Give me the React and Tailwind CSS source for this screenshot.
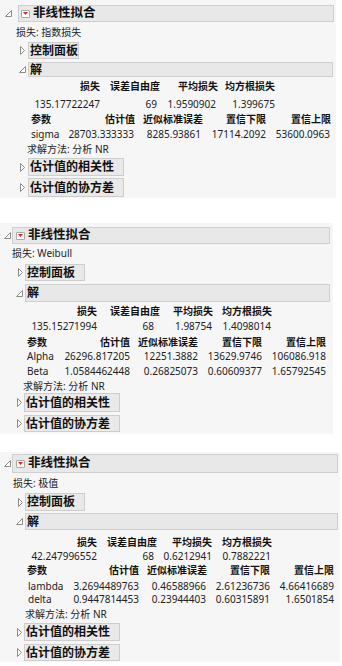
import React from "react";

const F = "font-['Noto_Sans','Noto_Sans_CJK_SC',sans-serif]";

function TriOpen() {
  return (
    <svg width="7" height="7" viewBox="0 0 7 7" className="block">
      <path d="M6.5 0.5V6.5H0.5Z" fill="#ffffff" stroke="#8c8c8c" strokeWidth="1" />
    </svg>
  );
}

function TriClosed() {
  return (
    <svg width="5" height="9" viewBox="0 0 5 9" className="block">
      <path d="M0.5 0.5L4.5 4.5L0.5 8.5Z" fill="#ffffff" stroke="#8c8c8c" strokeWidth="1" />
    </svg>
  );
}

function RedMenu() {
  return (
    <span className="flex h-[8px] w-[9px] shrink-0 items-center justify-center rounded-[1px] border border-[#a8a8a8] bg-white">
      <svg width="5" height="3" viewBox="0 0 5 3" className="block">
        <path d="M0 0H5L2.5 3Z" fill="#e3241f" />
      </svg>
    </span>
  );
}

function Row({ className, cols, cells, pads, bold, firstLeft }) {
  return (
    <div className={"flex h-[12px] items-center leading-[12px] " + className}>
      {cells.map((t, i) => (
        <div
          key={i}
          className={
            cols[i] +
            " shrink-0 whitespace-nowrap " +
            (firstLeft && i === 0 ? "text-left " : "text-right ") +
            (bold ? "font-bold text-[#111] " : "text-[#222] ") +
            ((pads && pads[i]) || "")
          }
        >
          {t}
        </div>
      ))}
    </div>
  );
}

function Panel({ c, loss, sumHdr, sumVals, params }) {
  return (
    <div className={"bg-[#f6f6f6] text-[10px] " + c.wrap}>
      {/* header */}
      <div className={"flex items-center " + c.head}>
        <div className={"flex h-full items-center shrink-0 " + c.headTri}>
          <TriOpen />
        </div>
        <div className={"flex h-full items-center border border-[#cfcfcf] bg-[#e8e8e8] " + c.headBox}>
          <RedMenu />
          <span className="ml-[3px] text-[12.5px] font-bold leading-none text-[#111]">非线性拟合</span>
        </div>
      </div>
      {/* loss */}
      <div className={"flex items-center text-[#222] " + c.loss}>{loss}</div>
      {/* control panel */}
      <div className={"flex items-center " + c.ctrl}>
        <div className={"flex h-full items-center shrink-0 " + c.ctrlTri}>
          <TriClosed />
        </div>
        <div className={"flex h-full items-center border border-[#cdcdcd] bg-[#e9e9e9] pl-[1px] text-[12px] font-bold leading-none text-[#111] " + c.ctrlBtn}>
          控制面板
        </div>
      </div>
      {/* solution */}
      <div className={"flex items-center " + c.sol}>
        <div className={"flex h-full items-center shrink-0 " + c.solTri}>
          <TriOpen />
        </div>
        <div className={"flex h-full items-center border border-[#cfcfcf] bg-[#e8e8e8] pl-[1px] text-[12px] font-bold leading-none text-[#111] " + c.solBox}>
          解
        </div>
      </div>
      {/* summary table */}
      <Row className={c.sumHdr} cols={c.sumCols} cells={sumHdr} bold />
      <Row className={c.sumVal} cols={c.sumCols} cells={sumVals} pads={c.sumPads} />
      {/* parameter table */}
      <Row
        className={c.parHdr}
        cols={c.parCols}
        cells={["参数", "估计值", "近似标准误差", "置信下限", "置信上限"]}
        bold
        firstLeft
      />
      {params.map((p, i) => (
        <Row key={i} className={c.parRows[i]} cols={c.parCols} cells={p} pads={c.parPads} firstLeft />
      ))}
      <div className={"flex h-[12px] items-center leading-[12px] text-[#222] " + c.method}>求解方法: 分析 NR</div>
      {/* collapsed outlines */}
      <div className={"flex items-center " + c.btn1}>
        <div className={"flex h-full items-center shrink-0 " + c.btnTri}>
          <TriClosed />
        </div>
        <div className="flex h-full w-[96px] items-center border border-[#cdcdcd] bg-[#e9e9e9] pl-[1px] text-[12px] font-bold leading-none text-[#111]">
          估计值的相关性
        </div>
      </div>
      <div className={"flex items-center " + c.btn2}>
        <div className={"flex h-full items-center shrink-0 " + c.btnTri}>
          <TriClosed />
        </div>
        <div className="flex h-full w-[96px] items-center border border-[#cdcdcd] bg-[#e9e9e9] pl-[1px] text-[12px] font-bold leading-none text-[#111]">
          估计值的协方差
        </div>
      </div>
    </div>
  );
}

const SUM_HDR = ["损失", "误差自由度", "平均损失", "均方根损失"];

const C1 = {
  wrap: "w-[336px] h-[198px] pt-[5px]",
  head: "h-[17px]",
  headTri: "w-[18px] pl-[5px]",
  headBox: "w-[316px] pl-[2px]",
  loss: "mt-[3px] h-[14px] pl-[16px]",
  ctrl: "mt-[3px] h-[17px]",
  ctrlTri: "w-[28px] pl-[20px]",
  ctrlBtn: "w-[51px]",
  sol: "mt-[3px] h-[15px]",
  solTri: "w-[28px] pl-[19px]",
  solBox: "w-[305px]",
  sumHdr: "mt-[3px] pl-[34px]",
  sumVal: "mt-[6px] pl-[34px]",
  sumCols: ["w-[66px]", "w-[60px]", "w-[58px]", "w-[57px]"],
  sumPads: ["", "pr-[3px]", "pr-[2px]", ""],
  parHdr: "mt-[3px] pl-[31px]",
  parCols: ["w-[34px]", "w-[70px]", "w-[68px]", "w-[63px]", "w-[65px]"],
  parPads: ["", "pr-[1px]", "pr-[2px]", "", "pr-[1px]"],
  parRows: ["mt-[3px] pl-[31px]"],
  method: "mt-[3px] pl-[27px]",
  btnTri: "w-[28px] pl-[20px]",
  btn1: "mt-[3px] h-[18px]",
  btn2: "mt-[2px] h-[19px]",
};

const C2 = {
  wrap: "mt-[25px] w-[333px] h-[211px] pt-[4px]",
  head: "h-[17px]",
  headTri: "w-[12px] pl-[4px]",
  headBox: "w-[318px] pl-[3px]",
  loss: "mt-[2px] h-[14px] pl-[12px]",
  ctrl: "mt-[4px] h-[17px]",
  ctrlTri: "w-[25px] pl-[18px]",
  ctrlBtn: "w-[60px]",
  sol: "mt-[3px] h-[18px]",
  solTri: "w-[25px] pl-[16px]",
  solBox: "w-[305px]",
  sumHdr: "mt-[3px] pl-[30px]",
  sumVal: "mt-[3px] pl-[30px]",
  sumCols: ["w-[67px]", "w-[63px]", "w-[53px]", "w-[59px]"],
  sumPads: ["", "pr-[6px]", "pr-[1px]", "pr-[1px]"],
  parHdr: "mt-[4px] pl-[27px]",
  parCols: ["w-[33px]", "w-[70px]", "w-[68px]", "w-[64px]", "w-[64px]"],
  parPads: ["", "", "", "", ""],
  parRows: ["mt-[2px] pl-[27px]", "mt-[3px] pl-[27px]"],
  method: "mt-[3px] pl-[23px]",
  btnTri: "w-[24px] pl-[17px]",
  btn1: "mt-[1px] h-[19px]",
  btn2: "mt-[3px] h-[17px]",
};

const C3 = {
  wrap: "mt-[18px] w-[340px] h-[210px] pt-[2px]",
  head: "h-[19px]",
  headTri: "w-[12px] pl-[4px]",
  headBox: "w-[326px] pl-[3px]",
  loss: "mt-[4px] h-[13px] pl-[13px]",
  ctrl: "mt-[3px] h-[18px]",
  ctrlTri: "w-[25px] pl-[18px]",
  ctrlBtn: "w-[60px]",
  sol: "mt-[2px] h-[17px]",
  solTri: "w-[25px] pl-[16px]",
  solBox: "w-[313px]",
  sumHdr: "mt-[6px] pl-[31px]",
  sumVal: "mt-[2px] pl-[31px]",
  sumCols: ["w-[66px]", "w-[60px]", "w-[55px]", "w-[60px]"],
  sumPads: ["", "pr-[3px]", "", "pr-[1px]"],
  parHdr: "mt-[2px] pl-[27px]",
  parCols: ["w-[42px]", "w-[70px]", "w-[68px]", "w-[63px]", "w-[64px]"],
  parPads: ["pl-[1px]", "", "pr-[1px]", "", ""],
  parRows: ["mt-[4px] pl-[27px]", "mt-[1px] pl-[27px]"],
  method: "mt-[3px] pl-[25px]",
  btnTri: "w-[24px] pl-[17px]",
  btn1: "mt-[3px] h-[18px]",
  btn2: "mt-[3px] h-[17px]",
};

export default function App() {
  return (
    <div className={"h-[666px] w-[342px] overflow-hidden bg-white " + F}>
      <Panel
        c={C1}
        loss="损失: 指数损失"
        sumHdr={SUM_HDR}
        sumVals={["135.17722247", "69", "1.9590902", "1.399675"]}
        params={[["sigma", "28703.333333", "8285.93861", "17114.2092", "53600.0963"]]}
      />
      <Panel
        c={C2}
        loss="损失: Weibull"
        sumHdr={SUM_HDR}
        sumVals={["135.15271994", "68", "1.98754", "1.4098014"]}
        params={[
          ["Alpha", "26296.817205", "12251.3882", "13629.9746", "106086.918"],
          ["Beta", "1.0584462448", "0.26825073", "0.60609377", "1.65792545"],
        ]}
      />
      <Panel
        c={C3}
        loss="损失: 极值"
        sumHdr={SUM_HDR}
        sumVals={["42.247996552", "68", "0.6212941", "0.7882221"]}
        params={[
          ["lambda", "3.2694489763", "0.46588966", "2.61236736", "4.66416689"],
          ["delta", "0.9447814453", "0.23944403", "0.60315891", "1.6501854"],
        ]}
      />
    </div>
  );
}
